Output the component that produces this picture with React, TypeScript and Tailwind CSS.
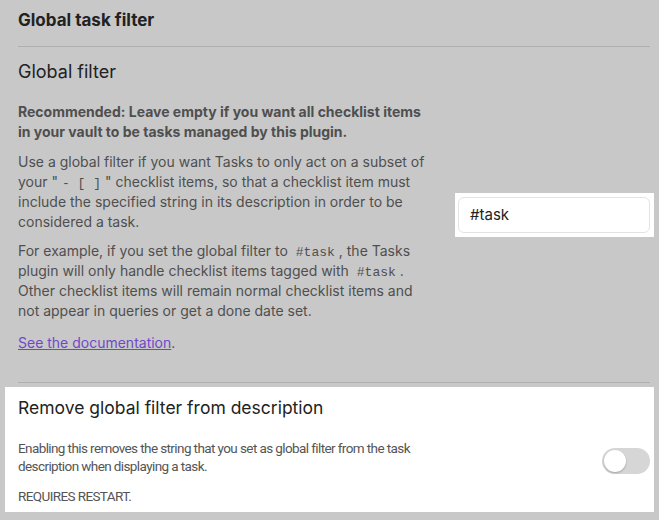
export default function App() {
  return (
    <div
      className="min-h-[520px] w-[659px] overflow-hidden bg-[#c8c8c8] pl-[18px] pr-[9px] text-[#4f4f4f]"
      style={{ fontFamily: 'Inter, "Noto Sans", sans-serif' }}
    >
      <div className="border-b border-[#b0b0b0] pb-[14px] pt-[8px]">
        <h2 className="text-[17px] font-bold leading-[24px] text-[#222]">Global task filter</h2>
      </div>

      <div className="flex items-center border-b border-[#b0b0b0] pb-[29px] pt-[13px]">
        <div className="w-[412px] shrink-0">
          <div className="text-[18px] leading-[24px] text-[#222]">Global filter</div>
          <div className="mt-[18px] text-[14px] leading-[20px]">
            <p className="font-bold">
              Recommended: Leave empty if you want all checklist items in your vault to be tasks managed by this
              plugin.
            </p>
            <p className="mt-[10px]">
              Use a global filter if you want Tasks to only act on a subset of your "
              <code className="px-1 font-mono text-[13px] leading-none">- [ ]</code>" checklist items, so that a
              checklist item must include the specified string in its description in order to be considered a task.
            </p>
            <p className="mt-[9px]">
              For example, if you set the global filter to{' '}
              <code className="px-1 font-mono text-[13px] leading-none">#task</code>, the Tasks plugin will only
              handle checklist items tagged with <code className="px-1 font-mono text-[13px] leading-none">#task</code>.
              Other checklist items will remain normal checklist items and not appear in queries or get a done date
              set.
            </p>
            <p className="mt-[12px]">
              <a href="#" className="text-[#7048c8] underline">
                See the documentation
              </a>
              .
            </p>
          </div>
        </div>
        <div className="ml-auto mr-[-4px] mt-4 bg-white p-[4px] pl-[3px]">
          <input
            type="text"
            defaultValue="#task"
            className="h-[36px] w-[192px] rounded-[6px] border border-[#e3e3e3] bg-white px-[11px] text-[15px] text-[#222] outline-none"
          />
        </div>
      </div>

      <div className="ml-[-13px] mr-[-4px] mt-[4px] bg-white pb-[7px] pl-[13px] pr-[4px] pt-[10px]">
        <div className="flex items-center">
          <div className="w-[420px]">
            <div className="text-[17.5px] leading-[22px] text-[#222]">Remove global filter from description</div>
            <div
              className="mt-[20px] text-[13.5px] leading-[18px] tracking-[-0.6px] text-[#555]"
              style={{ fontFamily: 'Roboto, sans-serif' }}
            >
              Enabling this removes the string that you set as global filter from the task
              <br />
              description when displaying a task.
            </div>
          </div>
          <button
            type="button"
            className="ml-auto mt-[50px] flex h-[26px] w-[48px] items-center rounded-full bg-[#d6d6d6] p-[2px]"
          >
            <span className="h-[22px] w-[22px] rounded-full bg-white shadow-[0_1px_2px_rgba(0,0,0,0.25)]" />
          </button>
        </div>
        <div
          className="mt-[12px] text-[13.5px] leading-[18px] tracking-[-0.6px] text-[#555]"
          style={{ fontFamily: 'Roboto, sans-serif' }}
        >
          REQUIRES RESTART.
        </div>
      </div>
    </div>
  )
}
